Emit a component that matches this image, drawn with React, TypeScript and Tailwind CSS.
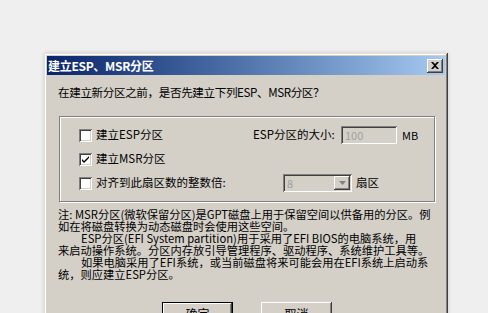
import React from 'react';

const font = "font-['Noto_Sans_CJK_SC','Liberation_Sans',sans-serif]";

const raised =
  'shadow-[inset_-1px_-1px_#404040,inset_1px_1px_#ffffff,inset_-2px_-2px_#808080,inset_2px_2px_#d4d0c8]';
const sunken =
  'shadow-[inset_1px_1px_#808080,inset_-1px_-1px_#ffffff,inset_2px_2px_#404040,inset_-2px_-2px_#d4d0c8]';

const Checkbox: React.FC<{ checked?: boolean }> = ({ checked }) => (
  <div className={`w-[13px] h-[13px] bg-white flex items-center justify-center shrink-0 ${sunken}`}>
    {checked && (
      <svg width="9" height="9" viewBox="0 0 9 9">
        <path d="M1 4 L3 6 L8 1 L8 3 L3 8 L1 6 Z" fill="#000" />
      </svg>
    )}
  </div>
);

const Button: React.FC<{ label: string; isDefault?: boolean }> = ({ label, isDefault }) => (
  <div className={`w-[71px] h-[23px] bg-[#d4d0c8] flex items-center justify-center ${isDefault ? 'border border-black' : ''}`}>
    <div className={`w-full h-full flex items-center justify-center ${raised}`}>
      <span className="text-[12px] text-black leading-none">{label}</span>
    </div>
  </div>
);

const notes = [
  { indent: false, text: '注: MSR分区(微软保留分区)是GPT磁盘上用于保留空间以供备用的分区。例' },
  { indent: false, text: '如在将磁盘转换为动态磁盘时会使用这些空间。' },
  { indent: true, text: 'ESP分区(EFI System partition)用于采用了EFI BIOS的电脑系统，用' },
  { indent: false, text: '来启动操作系统。分区内存放引导管理程序、驱动程序、系统维护工具等。' },
  { indent: true, text: '如果电脑采用了EFI系统，或当前磁盘将来可能会用在EFI系统上启动系' },
  { indent: false, text: '统，则应建立ESP分区。' },
];

export default function App() {
  return (
    <div className={`w-[488px] h-[313px] overflow-hidden bg-[#efefef] pt-[53px] pl-[44px] ${font}`}>
      <div
        className={`w-[404px] h-[290px] bg-[#d4d0c8] p-[3px] flex flex-col shadow-[inset_-1px_-1px_#404040,inset_1px_1px_#e4e0d8,inset_-2px_-2px_#808080,inset_2px_2px_#ffffff,0_0_4px_rgba(0,0,0,0.15)]`}
      >
        {/* title bar */}
        <div className="h-[19px] flex items-center justify-between bg-gradient-to-r from-[#0a246a] to-[#a6caf0] pl-[1px] pr-[2px]">
          <span className="text-white font-bold text-[12px] leading-none tracking-[-0.3px]">建立ESP、MSR分区</span>
          <div className={`w-[16px] h-[14px] bg-[#d4d0c8] flex items-center justify-center ${raised}`}>
            <svg width="8" height="7" viewBox="0 0 8 7">
              <path d="M0 0 L2 0 L4 2 L6 0 L8 0 L5 3.5 L8 7 L6 7 L4 5 L2 7 L0 7 L3 3.5 Z" fill="#000" />
            </svg>
          </div>
        </div>

        <div className="flex flex-col pl-[11px] pr-[10px] pt-[9px] text-black">
          <div className="text-[11.6px] leading-[16px] whitespace-nowrap tracking-[-0.4px]">在建立新分区之前，是否先建立下列ESP、MSR分区？</div>

          {/* group box */}
          <div className="mt-[16px] ml-[1px] border border-[#808080] shadow-[inset_1px_1px_#ffffff,1px_1px_#ffffff] pl-[19px] pt-[6px] pb-[6px] text-[11.5px]">
            <div className="h-[24px] flex items-center">
              <div className="w-[174px] flex items-center gap-[4px]">
                <Checkbox />
                <span>建立ESP分区</span>
              </div>
              <span className="w-[88px] whitespace-nowrap">ESP分区的大小:</span>
              <div className={`w-[56px] h-[18px] bg-[#d4d0c8] ${sunken} flex items-center pl-[4px]`}>
                <span className="text-[#a0a0a0] text-[11px]">100</span>
              </div>
              <span className="ml-[5px] text-[11px]">MB</span>
            </div>
            <div className="h-[24px] flex items-center">
              <div className="flex items-center gap-[4px]">
                <Checkbox checked />
                <span>建立MSR分区</span>
              </div>
            </div>
            <div className="h-[24px] flex items-center">
              <div className="w-[204px] flex items-center gap-[4px]">
                <Checkbox />
                <span className="whitespace-nowrap">对齐到此扇区数的整数倍:</span>
              </div>
              <div className={`w-[69px] h-[18px] bg-[#d4d0c8] ${sunken} flex items-center justify-between p-[2px]`}>
                <span className="text-[#a0a0a0] text-[11px] pl-[2px]">8</span>
                <div className={`w-[16px] h-[14px] bg-[#d4d0c8] flex items-center justify-center ${raised}`}>
                  <svg width="7" height="4" viewBox="0 0 7 4">
                    <path d="M0 0 L7 0 L3.5 4 Z" fill="#808080" />
                  </svg>
                </div>
              </div>
              <span className="ml-[4px]">扇区</span>
            </div>
          </div>

          {/* notes */}
          <div className="mt-[6px] flex flex-col text-[11.25px] leading-[12px]">
            {notes.map((n, i) => (
              <div key={i} className={`whitespace-nowrap ${n.indent ? 'pl-[23px]' : ''}`}>
                {n.text}
              </div>
            ))}
          </div>

          <div className="mt-[22px] flex gap-[28px] pl-[104px]">
            <Button label="确定" isDefault />
            <Button label="取消" />
          </div>
        </div>
      </div>
    </div>
  );
}
